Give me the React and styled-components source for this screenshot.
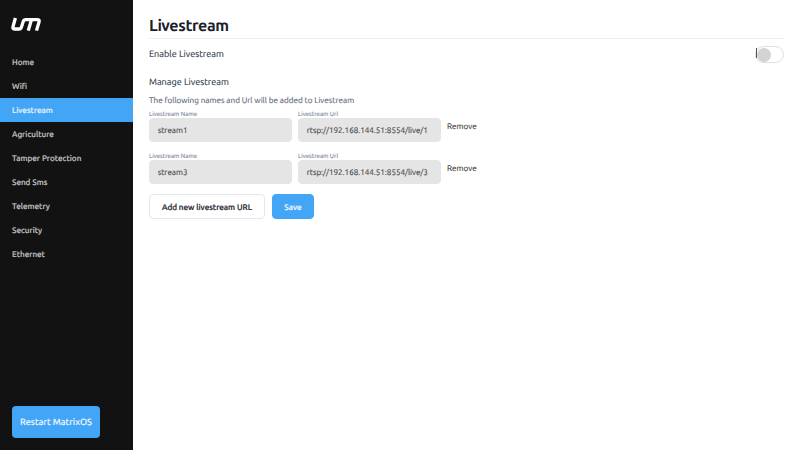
import React from "react";
import styled, { createGlobalStyle } from "styled-components";

const GlobalStyle = createGlobalStyle`
  * { box-sizing: border-box; }
  body {
    margin: 0;
    background: #fff;
    color: #1a202c;
    font-family: Ubuntu, "Noto Sans", "Open Sans", sans-serif;
    text-rendering: geometricPrecision;
    -webkit-text-stroke: 0.12px currentColor;
  }
  button, input { font: inherit; letter-spacing: inherit; text-rendering: inherit; }
`;

const Page = styled.div`
  display: flex;
  height: 450px;
  overflow: hidden;
`;

const Sidebar = styled.aside`
  display: flex;
  flex-direction: column;
  width: 133px;
  flex-shrink: 0;
  background: #121212;
`;

const Logo = styled.svg`
  display: block;
  width: 32px;
  height: 15px;
  margin: 17px 0 18px 10px;
`;

const Nav = styled.nav`
  display: flex;
  flex-direction: column;
`;

const NavItem = styled.a`
  height: 24px;
  padding-left: 12px;
  line-height: 25px;
  font-size: 8.1px;
  font-weight: 500;
  white-space: nowrap;
  -webkit-text-stroke-width: 0.15px;
  color: ${(p) => (p.$active ? "#e8f4ff" : "#c8c8c8")};
  background: ${(p) => (p.$active ? "#42a5f5" : "transparent")};
`;

const RestartButton = styled.button`
  width: 88px;
  height: 32px;
  margin: auto 0 12px 12px;
  padding: 0;
  border: 0;
  border-radius: 4px;
  background: #42a5f5;
  color: #f0f8ff;
  font-size: 9.1px;
  font-weight: 500;
  white-space: nowrap;
`;

const Main = styled.main`
  flex: 1;
  padding: 13px 16px 0;
`;

const Title = styled.h1`
  height: 26px;
  margin: 0;
  border-bottom: 1px solid #edf0f2;
  font-size: 16px;
  line-height: 27px;
  font-weight: 700;
  letter-spacing: -0.36px;
  -webkit-text-stroke-width: 0;
`;

const ToggleRow = styled.div`
  display: flex;
  align-items: center;
  justify-content: space-between;
  height: 31px;
`;

const Label = styled.span`
  height: 14px;
  margin-bottom: ${(p) => (p.$raised ? "2px" : "0")};
  font-size: 9.15px;
  line-height: 14px;
  color: #2d3748;
`;

const Switch = styled.button`
  position: relative;
  width: 29px;
  height: 17px;
  padding: 0;
  border: 1px solid #dedede;
  border-radius: 9px;
  background: #fff;

  &::before {
    content: "";
    position: absolute;
    left: 0.5px;
    top: 0.5px;
    width: 14px;
    height: 14px;
    border-radius: 50%;
    background: #d3d3d3;
  }

  &::after {
    content: "";
    position: absolute;
    left: 0;
    top: 1px;
    width: 1px;
    height: 10px;
    background: #555;
  }
`;

const Section = styled.section`
  display: flex;
  flex-direction: column;
  padding-top: 5px;
`;

const Hint = styled.p`
  margin: 5px 0 5px;
  font-size: 8.12px;
  line-height: 12px;
  color: #5a6577;
`;

const StreamRow = styled.div`
  display: flex;
  gap: 6px;
  height: 42px;
`;

const Field = styled.label`
  display: flex;
  flex-direction: column;
  width: 143px;
  font-size: 6.2px;
  line-height: 7px;
  color: #7c889b;
`;

const Input = styled.input`
  width: 100%;
  height: 24px;
  padding: 0 7.7px;
  border: 1px solid #e5e5e5;
  border-radius: 4px;
  outline: 0;
  background: #e5e5e5;
  color: #484848;
  font-size: 8.06px;
  font-weight: 400;
  -webkit-text-stroke: 0.15px #484848;
`;

const RemoveLink = styled.button`
  align-self: flex-start;
  margin-top: 9px;
  padding: 0;
  border: 0;
  background: none;
  color: #333;
  font-size: 8.1px;
  line-height: 12px;
`;

const Actions = styled.div`
  display: flex;
  gap: 7px;
  margin-top: -1px;
`;

const Button = styled.button`
  width: ${(p) => (p.$primary ? "42px" : "116px")};
  height: 25px;
  padding: 0;
  border: 1px solid ${(p) => (p.$primary ? "#42a5f5" : "#e4e8ed")};
  border-radius: 4px;
  background: ${(p) => (p.$primary ? "#42a5f5" : "#fff")};
  color: ${(p) => (p.$primary ? "#f0f8ff" : "#1a202c")};
  font-size: 8.1px;
  font-weight: 500;
  white-space: nowrap;
  -webkit-text-stroke: 0.2px currentColor;
`;

const navItems = [
  "Home",
  "Wifi",
  "Livestream",
  "Agriculture",
  "Tamper Protection",
  "Send Sms",
  "Telemetry",
  "Security",
  "Ethernet",
];

const streams = [
  { name: "stream1", url: "rtsp://192.168.144.51:8554/live/1" },
  { name: "stream3", url: "rtsp://192.168.144.51:8554/live/3" },
];

export default function App() {
  return (
    <Page>
      <GlobalStyle />
      <Sidebar>
        <Logo viewBox="0 0 32 15" fill="none" stroke="#fff" strokeWidth="3.3" strokeLinejoin="round">
          <path d="M5.4 1 L3 9.8 Q2.3 12 4.4 12 H9 Q10.8 12 11.4 10.2 L13.3 4.3 Q13.9 2.6 15.8 2.6 H27.3 Q29.7 2.6 29.1 4.7 L26.5 13.6" />
          <path d="M21.4 2.8 L18.3 13.6" />
        </Logo>
        <Nav>
          {navItems.map((item) => (
            <NavItem key={item} $active={item === "Livestream"}>
              {item}
            </NavItem>
          ))}
        </Nav>
        <RestartButton>Restart MatrixOS</RestartButton>
      </Sidebar>
      <Main>
        <Title>Livestream</Title>
        <ToggleRow>
          <Label $raised>Enable Livestream</Label>
          <Switch role="switch" aria-checked="false" aria-label="Enable Livestream" />
        </ToggleRow>
        <Section>
          <Label>Manage Livestream</Label>
          <Hint>The following names and Url will be added to Livestream</Hint>
          {streams.map((stream) => (
            <StreamRow key={stream.name}>
              <Field>
                Livestream Name
                <Input defaultValue={stream.name} />
              </Field>
              <Field>
                Livestream Url
                <Input defaultValue={stream.url} />
              </Field>
              <RemoveLink>Remove</RemoveLink>
            </StreamRow>
          ))}
          <Actions>
            <Button>Add new livestream URL</Button>
            <Button $primary>Save</Button>
          </Actions>
        </Section>
      </Main>
    </Page>
  );
}
